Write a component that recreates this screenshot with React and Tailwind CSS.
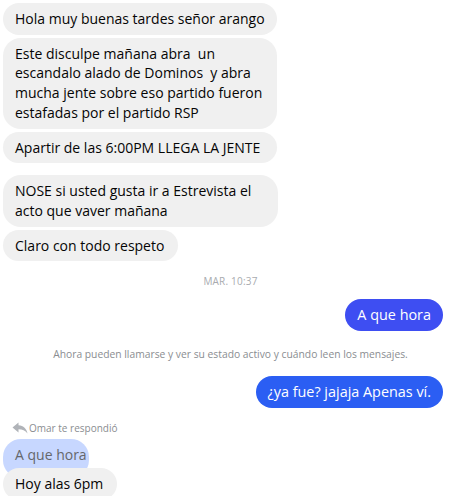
import React from "react";

const font = { fontFamily: '"Open Sans", "Noto Sans", sans-serif' };

function Left({ w, children, className = "" }) {
  return (
    <div
      className={`bg-[#f0f0f0] text-[#050505] rounded-[18px] px-[12px] py-[6px] text-[14px] leading-[19.7px] whitespace-nowrap ${className}`}
      style={{ width: w }}
    >
      {children}
    </div>
  );
}

function Right({ children, className = "" }) {
  return (
    <div className="flex justify-end pr-[14px]">
      <div
        className={`rounded-[18px] px-[12px] py-[6px] text-[14.4px] leading-[19.7px] text-white whitespace-nowrap ${className}`}
      >
        {children}
      </div>
    </div>
  );
}

export default function App() {
  return (
    <div className="w-[457px] h-[496px] overflow-hidden bg-white" style={font}>
      <div className="pl-[3px] pt-[3px] flex flex-col gap-[3px]">
        <Left w={274}>Hola muy buenas tardes señor arango</Left>
        <Left w={274}>
          Este disculpe mañana abra&nbsp; un
          <br />
          escandalo alado de Dominos&nbsp; y abra
          <br />
          mucha jente sobre eso partido fueron
          <br />
          estafadas por el partido RSP
        </Left>
        <Left w={274}>Apartir de las 6:00PM LLEGA LA JENTE</Left>
      </div>
      <div className="pl-[3px] mt-[12px] flex flex-col gap-[3px]">
        <Left w={275}>
          NOSE si usted gusta ir a Estrevista el
          <br />
          acto que vaver mañana
        </Left>
        <Left w={175}>Claro con todo respeto</Left>
      </div>
      <div className="mt-[13px] text-center text-[10px] leading-[14px] tracking-[0.2px] text-[#a8abaf] uppercase pl-[4px]">
        Mar. 10:37
      </div>
      <div className="mt-[11px]">
        <Right className="bg-[#3e4ef2]">A que hora</Right>
      </div>
      <div className="mt-[16px] text-center text-[10.3px] leading-[14px] text-[#8a8d91] pl-[4px]">
        Ahora pueden llamarse y ver su estado activo y cuándo leen los mensajes.
      </div>
      <div className="mt-[15px]">
        <Right className="bg-[#2b5ef3]">¿ya fue? jajaja Apenas ví.</Right>
      </div>
      <div className="mt-[13px] pl-[12px] flex items-center gap-[1px] text-[10px] leading-[14px] text-[#8a8d91]">
        <svg width="16" height="12" viewBox="0 0 16 12" className="shrink-0">
          <path
            d="M6.5 0.5 L0.5 5.5 L6.5 10.5 L6.5 7.3 C10.5 7.3 13.2 8.4 15.5 11.5 C14.6 6.8 11.6 3.8 6.5 3.3 Z"
            fill="#b0b3b8"
          />
        </svg>
        <span>Omar te respondió</span>
      </div>
      <div className="pl-[3px] mt-[4px] flex flex-col items-start">
        <div className="bg-[#c7d7ff] text-[#65676b] rounded-[18px] px-[12px] pt-[6px] pb-[14px] text-[14px] leading-[19.7px] whitespace-nowrap w-[86px]">
          A que hora
        </div>
        <div className="-mt-[10px]">
          <Left w={114}>Hoy alas 6pm</Left>
        </div>
      </div>
    </div>
  );
}
